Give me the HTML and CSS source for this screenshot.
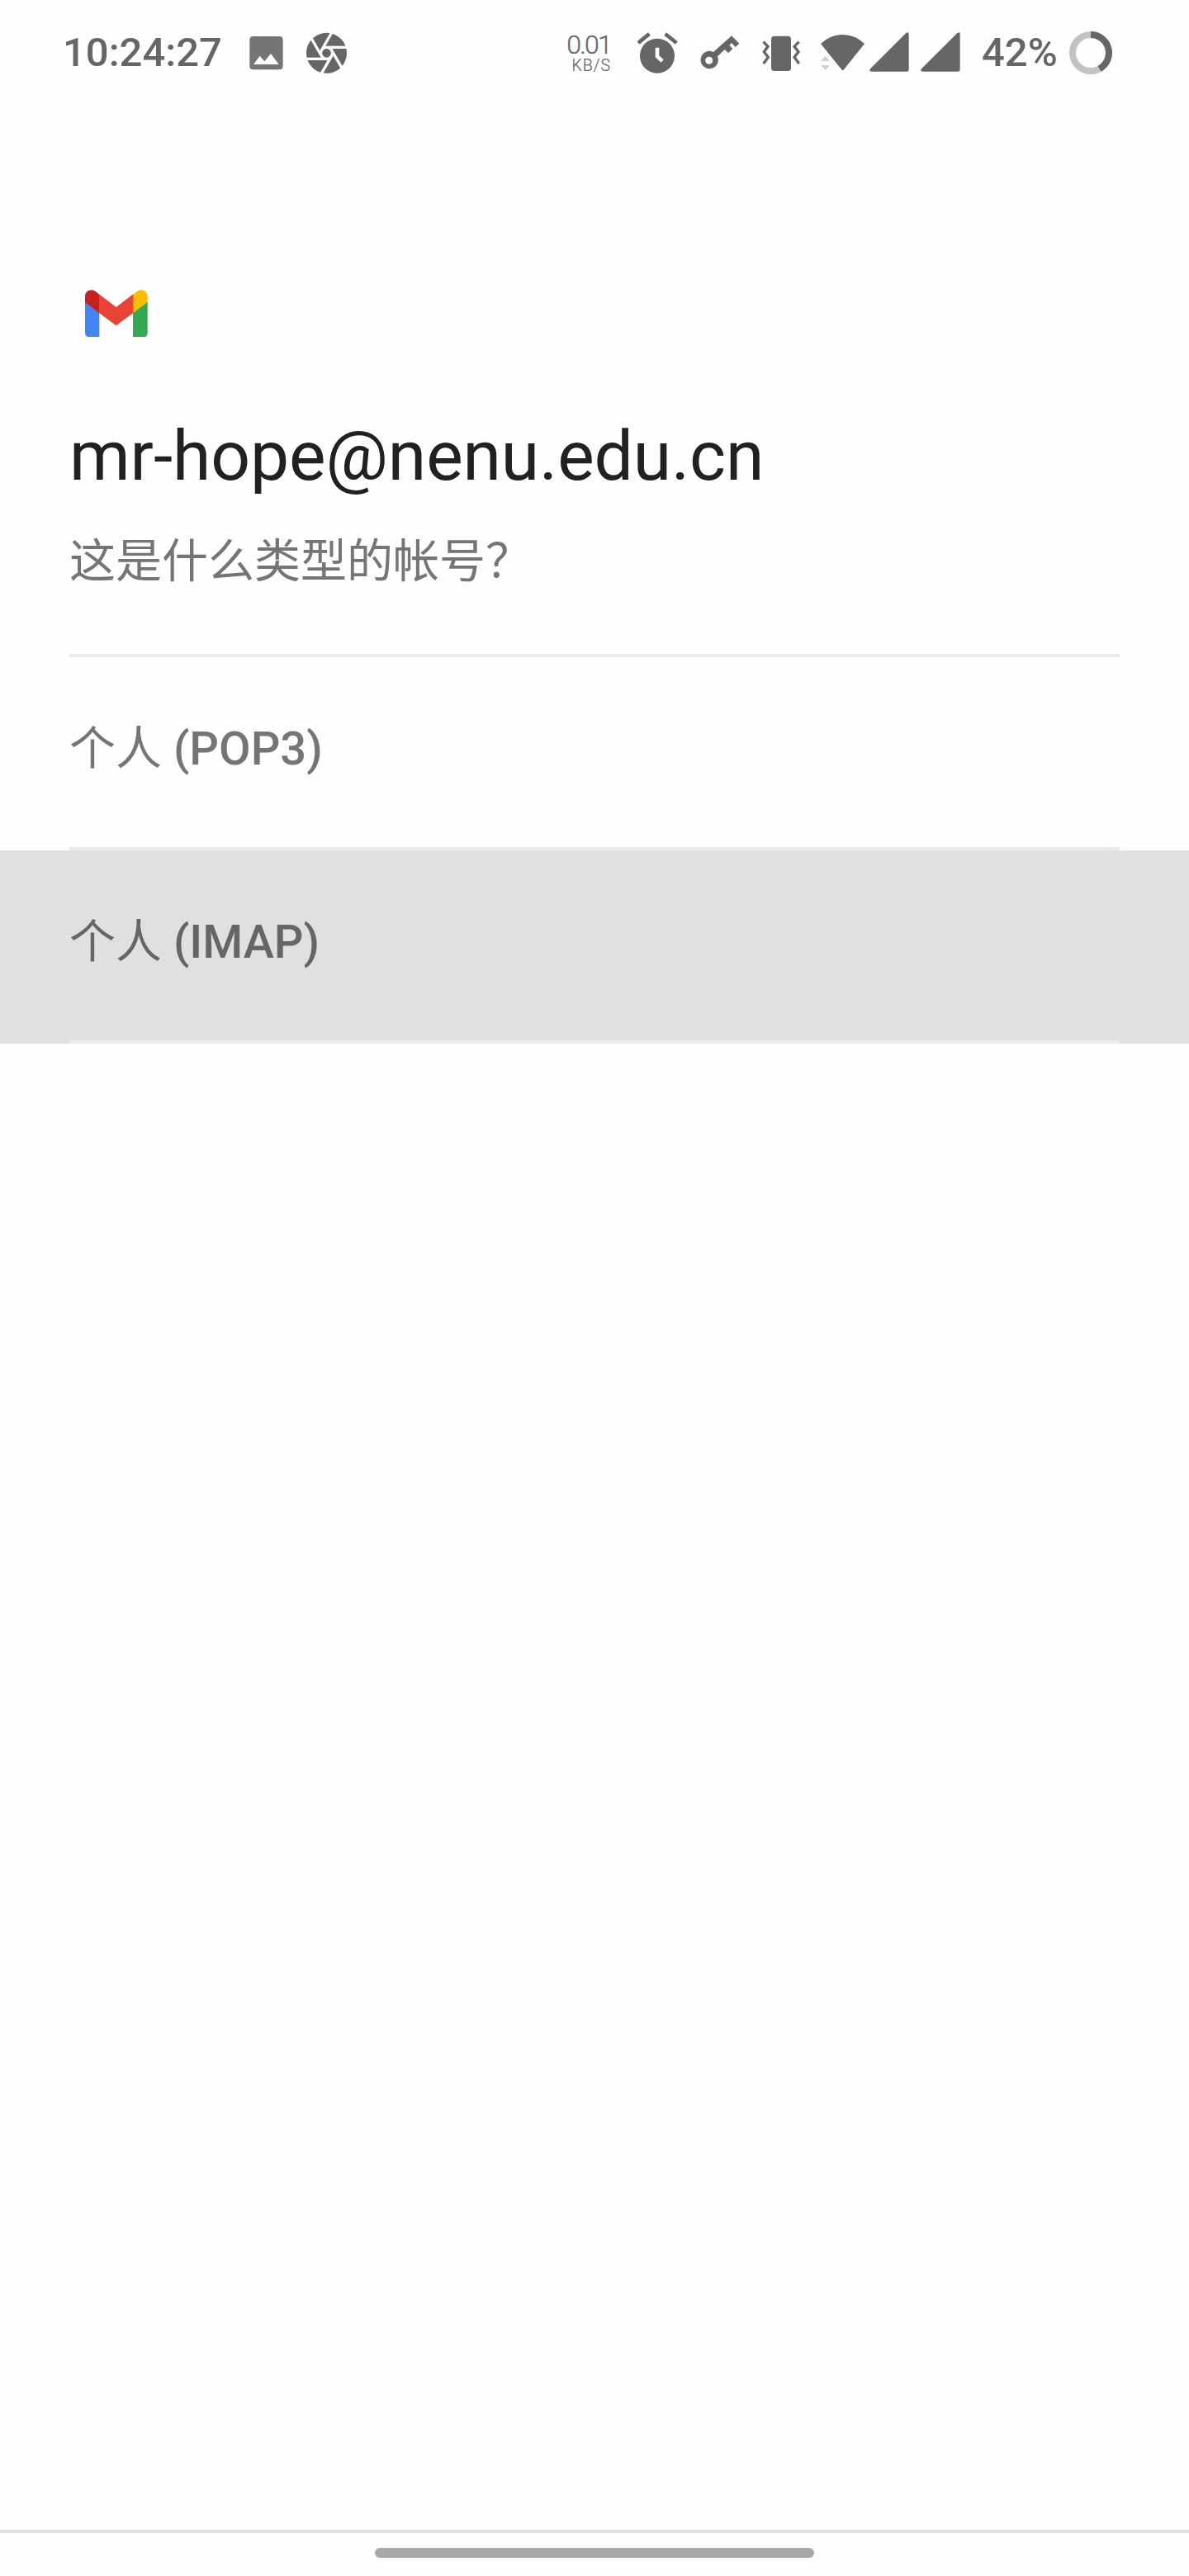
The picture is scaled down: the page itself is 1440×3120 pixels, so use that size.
FILE: index.html
```html
<!DOCTYPE html>
<html lang="zh-CN">
<head>
<meta charset="utf-8">
<title>Gmail</title>
<link rel="stylesheet" href="styles.css">
</head>
<body>
<div class="screen">
  <header class="status">
    <div class="status-group">
      <span class="clock">10:24:27</span>
      <svg class="icon icon-image" width="43" height="57" viewBox="723 45 129 171">
        <path fill="#757575" fill-rule="evenodd" d="M740 72H835Q848 72 848 85V180Q848 193 835 193H740Q727 193 727 180V85Q727 72 740 72ZM741 174H833L804 135L781 163L764 143Z"/>
      </svg>
      <svg class="icon icon-shutter" width="51" height="57" viewBox="930 45 153 171">
        <circle cx="1006.500" cy="133" r="73.500"/>
        <g class="blades">
          <path id="blade" d="M1000 112H1084"/>
          <use href="#blade" transform="rotate(60 1006.500 133)"/>
          <use href="#blade" transform="rotate(120 1006.500 133)"/>
          <use href="#blade" transform="rotate(180 1006.500 133)"/>
          <use href="#blade" transform="rotate(240 1006.500 133)"/>
          <use href="#blade" transform="rotate(300 1006.500 133)"/>
        </g>
        <circle class="shutter-hole" cx="1006.500" cy="133" r="24"/>
        <circle cx="1006.500" cy="133" r="16"/>
      </svg>
    </div>
    <div class="status-group">
      <div class="speed"><span class="speed-value">0.01</span><span class="speed-unit">KB/S</span></div>
      <svg class="icon icon-alarm" width="52" height="57" viewBox="300 45 156 171">
        <path fill-rule="evenodd" d="M378 80A63 63 0 1 1 377.900 80ZM371 113V148L392 167L401 157L385 142V113Z"/>
        <path class="line" stroke-width="14" d="M309 96L349 63M407 63L448 96"/>
      </svg>
      <svg class="icon icon-key" width="49" height="57" viewBox="531 45 147 171">
        <path fill-rule="evenodd" d="M648 70L676 98L662 111L648 96L640 104L652 117L636 133L623 120L597 145A32 32 0 1 1 582 129ZM566 146A13.500 13.500 0 1 0 566.100 146Z"/>
      </svg>
      <svg class="icon icon-vibrate" width="48" height="57" viewBox="756 45 144 171">
        <rect x="792" y="71" width="72" height="127" rx="12"/>
        <path class="line" stroke-width="10" d="M764 92L780 109L766 128L781 148L764 171M893 92L876 109L891 128L876 148L893 171"/>
      </svg>
      <svg class="icon icon-wifi" width="55" height="57" viewBox="39 45 165 171">
        <path d="M42 99Q77 66 122 66T201 99L126 193Q122 199 118 193Z"/>
        <path fill="#cfcfcf" d="M42 162L58.500 143L75 162ZM42 177H75L58.500 195Z"/>
      </svg>
      <svg class="icon icon-signal" width="49" height="57" viewBox="216 45 147 171">
        <path d="M222 190L352 60Q362 54 362 65V192Q362 200 354 200H226Q216 199 222 190Z"/>
      </svg>
      <svg class="icon icon-signal-second" width="49" height="57" viewBox="216 45 147 171">
        <path d="M222 190L352 60Q362 54 362 65V192Q362 200 354 200H226Q216 199 222 190Z"/>
      </svg>
      <span class="percent">42%</span>
      <svg class="icon icon-battery" width="54" height="57" viewBox="942 45 162 171">
        <circle cx="1023" cy="132" r="66" fill="none" stroke="#c2c2c2" stroke-width="24"/>
        <path fill="none" stroke="#666" stroke-width="24" d="M1023 66A66 66 0 0 1 1054.800 189.800"/>
      </svg>
    </div>
  </header>

  <main class="content">
    <section class="intro">
      <svg class="logo" width="78" height="60" viewBox="96 60 234 180">
        <path fill="#4285f4" d="M99 106L151 145V234H113Q99 234 99 220Z"/>
        <path fill="#34a853" d="M326 106L273 145V234H312Q326 234 326 220Z"/>
        <path fill="#c5221f" d="M99 108V87C99 66 122 57 138 70L151 80V148Z"/>
        <path fill="#fbbc04" d="M326 108V87C326 66 303 57 287 70L273 80V148Z"/>
        <path fill="#ea4335" d="M150 79L212 126L274 79V147L212 193L150 147Z"/>
      </svg>
      <h1 class="address">mr-hope@nenu.edu.cn</h1>
      <p class="question">这是什么类型的帐号？</p>
    </section>
    <ul class="types">
      <li class="type"><div class="type-label"><span class="han">个人</span> (POP3)</div></li>
      <li class="type type-pressed"><div class="type-label"><span class="han">个人</span> (IMAP)</div></li>
    </ul>
  </main>

  <footer class="nav"><div class="nav-handle"></div></footer>
</div>
</body>
</html>
```
FILE: styles.css
```css
* {
  box-sizing: border-box;
  margin: 0;
  padding: 0;
}

body {
  background: #fefefe;
  font-family: Roboto, "Noto Sans CJK SC", sans-serif;
}

.screen {
  display: flex;
  flex-direction: column;
  height: 3120px;
}

.status {
  display: flex;
  justify-content: space-between;
  height: 128px;
  padding: 35px 92px 0 76px;
  color: #666;
}

.status-group {
  display: flex;
  align-items: flex-start;
}

.icon {
  display: block;
  flex: none;
  fill: #666;
}

.line {
  fill: none;
  stroke: #666;
}

.blades {
  stroke: #fefefe;
  stroke-width: 10;
}

.shutter-hole {
  fill: #fefefe;
}

.clock,
.percent {
  font-size: 49px;
  font-weight: 500;
  line-height: 57px;
  white-space: nowrap;
}

.clock {
  width: 225px;
}

.icon-shutter {
  margin-left: 26px;
}

.speed {
  display: flex;
  flex-direction: column;
  align-items: flex-end;
  width: 60px;
  margin-right: 29px;
  padding-top: 3px;
}

.status-group .icon-alarm {
  margin-left: 1px;
}

.speed-value {
  font-size: 32px;
  font-weight: 300;
  line-height: 32px;
  letter-spacing: -1.800px;
  -webkit-text-stroke: 0.3px #666;
}

.speed-unit {
  font-size: 19.500px;
  font-weight: 300;
  line-height: 20px;
  letter-spacing: 1px;
  -webkit-text-stroke: 0.2px #666;
}

.icon-key {
  margin-left: 25px;
}

.icon-vibrate {
  margin-left: 26px;
}

.icon-wifi {
  margin-left: 23px;
}

.icon-signal {
  margin-left: 4px;
}

.icon-signal-second {
  margin-left: 13px;
}

.percent {
  width: 105px;
  margin-left: 26px;
}

.content {
  flex: 1;
}

.intro {
  display: flex;
  flex-direction: column;
  height: 668px;
  margin: 0 84px;
  padding-top: 222px;
}

.logo {
  margin-left: 18px;
}

.address {
  margin-top: 93px;
  color: #212121;
  font-size: 84px;
  font-weight: 400;
  line-height: 100px;
  letter-spacing: -0.100px;
}

.question {
  margin-top: 37px;
  color: #757575;
  font-size: 56px;
  line-height: 80px;
}

.types {
  list-style: none;
}

.intro,
.type-label {
  border-bottom: 4px solid #e8eaed;
}

.type {
  height: 234px;
  padding: 0 84px;
  color: #757575;
}

.type-pressed {
  background: #e0e0e0;
  color: #666;
}

.type-label {
  height: 234px;
  padding-top: 71px;
  font-size: 56px;
  font-weight: 500;
  line-height: 80px;
}

.han {
  font-weight: 400;
}

.nav {
  display: flex;
  justify-content: center;
  height: 56px;
  border-top: 4px solid #e0e0e0;
  padding-top: 18px;
}

.nav-handle {
  width: 532px;
  height: 12px;
  border-radius: 6px;
  background: #a8a8a8;
}
```
